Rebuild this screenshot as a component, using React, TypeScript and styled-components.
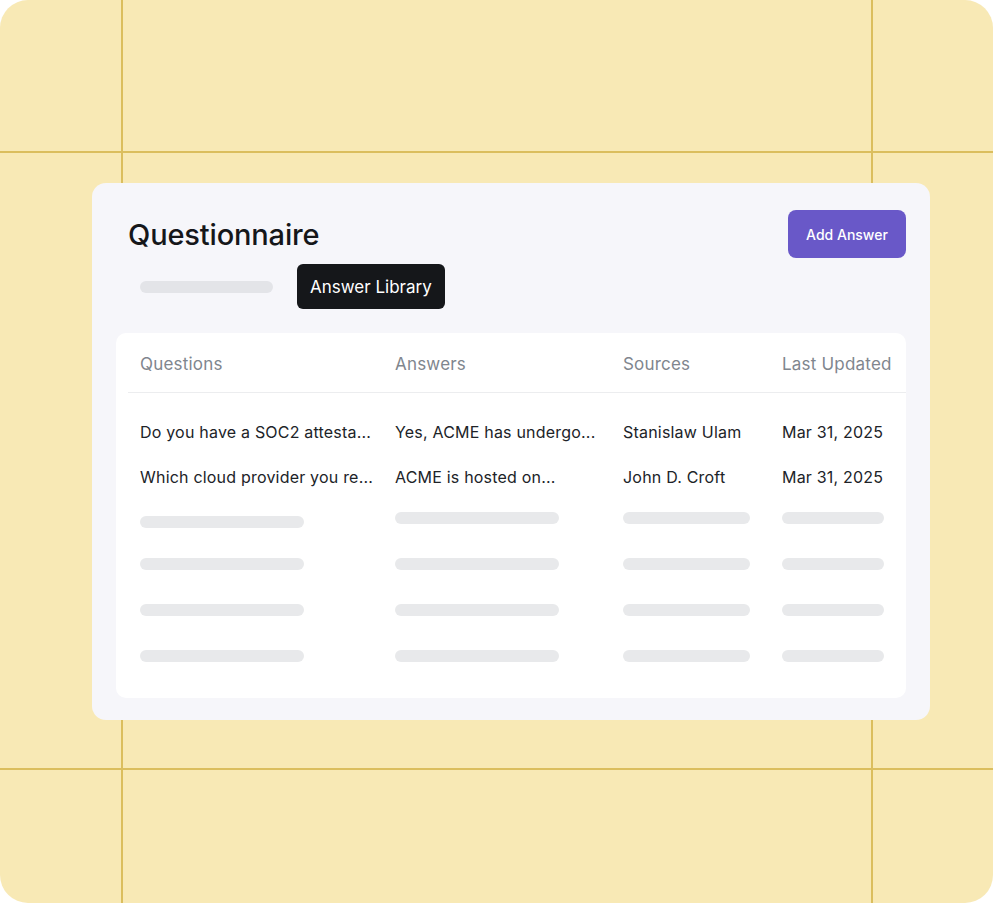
import styled, { createGlobalStyle } from "styled-components";

const GlobalStyle = createGlobalStyle`
    html, body {
        margin: 0;
        padding: 0;
        background: #ffffff;
    }
    body {
        font-family: "Inter", "Liberation Sans", sans-serif;
    }
`;

const line = "#DBBE5E";

const Frame = styled.div`
    width: 993px;
    height: 903px;
    box-sizing: border-box;
    border-radius: 28px;
    padding: 183px 0 0 92px;
    background:
        linear-gradient(${line}, ${line}) 121px 0 / 2px 100% no-repeat,
        linear-gradient(${line}, ${line}) 871px 0 / 2px 100% no-repeat,
        linear-gradient(${line}, ${line}) 0 151px / 100% 2px no-repeat,
        linear-gradient(${line}, ${line}) 0 768px / 100% 2px no-repeat,
        #F8E9B5;
`;

const Card = styled.div`
    width: 838px;
    box-sizing: border-box;
    background-color: #F6F6FA;
    border-radius: 14px;
    padding: 27px 24px 22px 24px;
    display: flex;
    flex-direction: column;
`;

const TopBar = styled.div`
    display: flex;
    align-items: center;
    justify-content: space-between;
    padding-left: 12px;
`;

const Title = styled.h1`
    margin: 0;
    font-size: 29px;
    font-weight: 500;
    letter-spacing: -0.15px;
    color: #15171A;
`;

const AddButton = styled.button`
    height: 48px;
    width: 118px;
    border: none;
    border-radius: 8px;
    background-color: #6958C8;
    color: #ffffff;
    font-family: inherit;
    font-size: 14px;
    font-weight: 500;
`;

const Tabs = styled.div`
    display: flex;
    align-items: center;
    gap: 24px;
    padding-left: 24px;
    margin-top: 6px;
`;

const Bar = styled.div<{ $w: number; $drop?: number }>`
    width: ${(p) => p.$w}px;
    height: 12px;
    border-radius: 6px;
    background-color: #E8E9EB;
    margin-top: ${(p) => p.$drop || 0}px;
`;

const TabBar = styled(Bar)`
    background-color: #E3E4E8;
`;

const ActiveTab = styled.div`
    height: 45px;
    padding: 0 13px;
    display: flex;
    align-items: center;
    border-radius: 6px;
    background-color: #15171A;
    color: #ffffff;
    font-size: 17px;
`;

const Table = styled.div`
    margin-top: 24px;
    background-color: #ffffff;
    border-radius: 10px;
    padding: 0 0 15px 12px;
`;

const cols = "255px 228px 159px 1fr";

const HeadRow = styled.div`
    display: grid;
    grid-template-columns: ${cols};
    align-items: center;
    height: 60px;
    padding: 2px 0 0 12px;
    box-sizing: border-box;
    border-bottom: 1px solid #ECEDEF;
`;

const HeadCell = styled.div`
    font-size: 17px;
    letter-spacing: 0.2px;
    color: #80868E;
    white-space: nowrap;
`;

const Body = styled.div`
    padding-top: 16px;
    padding-left: 12px;
`;

const TextRow = styled.div`
    display: grid;
    grid-template-columns: ${cols};
    align-items: center;
    height: 45px;
`;

const Cell = styled.div`
    font-size: 16px;
    letter-spacing: 0.2px;
    color: #202328;
    white-space: nowrap;
`;

const SkelRow = styled.div`
    display: grid;
    grid-template-columns: ${cols};
    align-items: start;
    height: 46px;
    padding-top: 13px;
    box-sizing: border-box;
`;

const rows = [
    ["Do you have a SOC2 attesta...", "Yes, ACME has undergo...", "Stanislaw Ulam", "Mar 31, 2025"],
    ["Which cloud provider you re...", "ACME is hosted on...", "John D. Croft", "Mar 31, 2025"],
];

const headers = ["Questions", "Answers", "Sources", "Last Updated"];
const barWidths = [164, 164, 127, 102];

export default function App() {
    return (
        <>
            <GlobalStyle />
            <Frame>
                <Card>
                    <TopBar>
                        <Title>Questionnaire</Title>
                        <AddButton>Add Answer</AddButton>
                    </TopBar>
                    <Tabs>
                        <TabBar $w={133} />
                        <ActiveTab>Answer Library</ActiveTab>
                    </Tabs>
                    <Table>
                        <HeadRow>
                            {headers.map((h) => (
                                <HeadCell key={h}>{h}</HeadCell>
                            ))}
                        </HeadRow>
                        <Body>
                            {rows.map((r, i) => (
                                <TextRow key={i}>
                                    {r.map((c, j) => (
                                        <Cell key={j}>{c}</Cell>
                                    ))}
                                </TextRow>
                            ))}
                            {[0, 1, 2, 3].map((i) => (
                                <SkelRow key={i}>
                                    {barWidths.map((w, j) => (
                                        <Bar key={j} $w={w} $drop={i === 0 && j === 0 ? 4 : 0} />
                                    ))}
                                </SkelRow>
                            ))}
                        </Body>
                    </Table>
                </Card>
            </Frame>
        </>
    );
}
